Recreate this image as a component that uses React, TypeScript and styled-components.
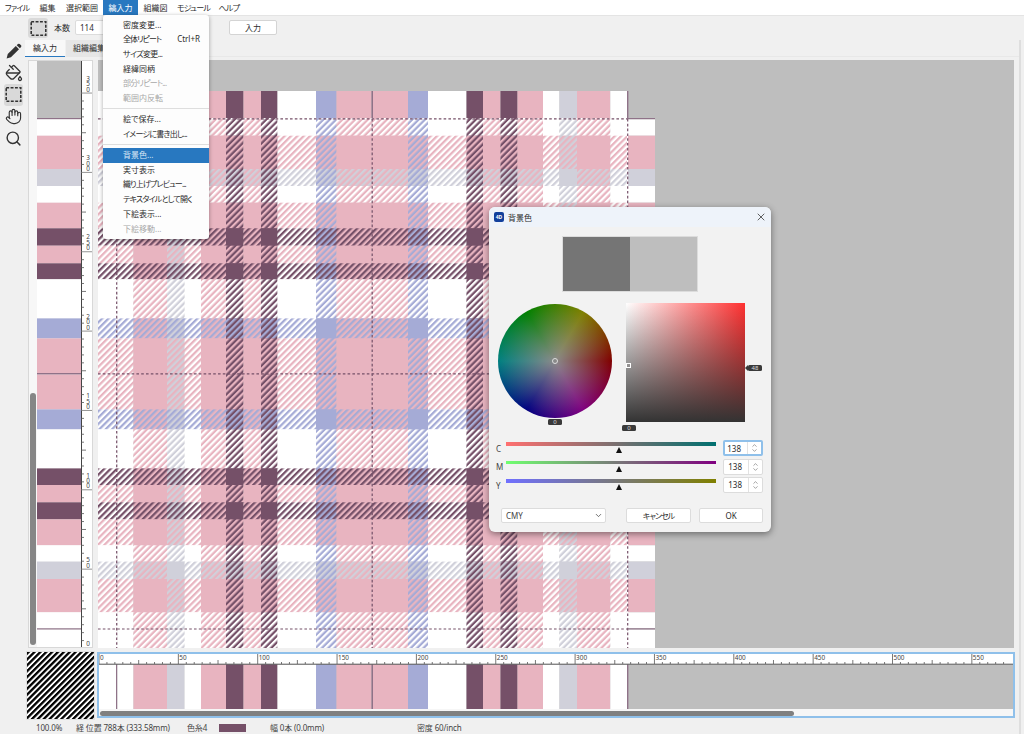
import React from 'react';
import styled, { createGlobalStyle } from 'styled-components';
import { ChevronDown, ChevronUp, Hand, PaintBucket, Search, X } from 'lucide-react';

const W = '#ffffff';
const P = '#e8b4c0';
const G = '#d0d0da';
const D = '#755068';
const L = '#8f7288';
const B = '#a5abd6';
const PX = 1.587;

type Stop = [number, string];

// start of each band in px, last entry closes the repeat
const warp: Stop[] = [
  [98, W], [116, L], [117.4, W], [133.5, P], [167, G], [184.5, W], [201, P], [226, D], [243.5, P],
  [261, D], [277.5, W], [316, B], [336.5, P], [371.5, L], [373, P], [408, B], [428, W], [466.5, D],
  [483, P], [500.5, D], [517.5, P], [543, W], [559.5, G], [577, P], [610.3, W], [627, L], [628.4, W],
];

const weft: Stop[] = [
  [118, L], [119.4, W], [135.7, P], [169, G], [186, W], [202.7, P], [228.3, D], [245.7, P], [263.3, D],
  [279.3, W], [318.4, B], [338.4, P], [373, L], [374.6, P], [409.4, B], [429.4, W], [468.4, D],
  [485, P], [502.3, D], [519.4, P], [545.3, W], [561.6, G], [579, P], [612.3, W], [628.3, L], [629.7, W], [648, W],
];

const bands = (stops: Stop[]) =>
  stops.slice(0, -1).map(([from, color], i) => ({ from, to: stops[i + 1][0], color }));

// thin marker bands take the ground colour of the band before them in the woven area
const woven = (stops: Stop[]) =>
  bands(stops).map((b, i, all) => (b.to - b.from < 2 ? { ...b, color: i ? all[i - 1].color : W } : b));

const hatchColors = [W, P, G, D, B];

const menuNames = [
  { name: 'ファイル', w: 34, tight: 0.8 },
  { name: '編集', w: 27 },
  { name: '選択範囲', w: 42 },
  { name: '縞入力', w: 35, on: true },
  { name: '組織図', w: 35 },
  { name: 'モジュール', w: 41, tight: 0.8 },
  { name: 'ヘルプ', w: 30, tight: 0.6 },
];

const menuItems = [
  { label: '密度変更...' },
  { label: '全体リピート', hint: 'Ctrl+R', tight: 1 },
  { label: 'サイズ変更...', tight: 0.6 },
  { label: '経緯同柄' },
  { label: '部分リピート...', off: true, tight: 0.8 },
  { label: '範囲内反転', off: true },
  { sep: true },
  { label: '絵で保存...' },
  { label: 'イメージに書き出し...', tight: 0.8 },
  { sep: true },
  { label: '背景色...', active: true },
  { label: '実寸表示' },
  { label: '織り上げプレビュー...', tight: 0.9 },
  { label: 'テキスタイルとして開く', tight: 0.8 },
  { label: '下絵表示...' },
  { label: '下絵移動...', off: true },
];

const GlobalStyle = createGlobalStyle`
  html, body {
    margin: 0;
    padding: 0;
    background: #f0f0f0;
  }
  body {
    font-family: "Noto Sans", "Noto Sans CJK JP", sans-serif;
    font-size: 8px;
    font-feature-settings: "palt";
    color: #2c2c2c;
  }
`;

const Page = styled.div`
  position: relative;
  width: 1024px;
  height: 734px;
  overflow: hidden;
  background: #f0f0f0;
  display: flex;
  flex-direction: column;
`;

const MenuBar = styled.div`
  height: 15px;
  background: #fff;
  display: flex;
  box-shadow: 0 1px 0 #e4e4e4;
`;

const MenuName = styled.div<{ $on?: boolean; $w: number; $tight?: number }>`
  width: ${p => p.$w}px;
  line-height: 15px;
  text-align: center;
  white-space: nowrap;
  letter-spacing: ${p => -(p.$tight ?? 0)}px;
  background: ${p => (p.$on ? '#2878c0' : 'transparent')};
  color: ${p => (p.$on ? '#fff' : '#2c2c2c')};
`;

const OptionBar = styled.div`
  height: 25px;
  padding: 3px 0 0 28px;
  box-sizing: border-box;
  display: flex;
  align-items: flex-start;
`;

const IconButton = styled.div`
  width: 20px;
  height: 20px;
  background: #d9d9d9;
  border-radius: 3px;
  display: flex;
  align-items: center;
  justify-content: center;
  color: #333;
`;

const OptionLabel = styled.span`
  margin: 0 5px 0 6px;
  line-height: 20px;
`;

const CountInput = styled.div`
  width: 124px;
  height: 15px;
  margin: 2px 30px 0 0;
  padding-left: 4px;
  box-sizing: border-box;
  background: #fff;
  border: 1px solid #dcdcdc;
  border-radius: 2px;
  line-height: 13px;
`;

const PlainButton = styled.div<{ $w: number; $tight?: number }>`
  width: ${p => p.$w}px;
  height: 15px;
  box-sizing: border-box;
  background: #fff;
  border: 1px solid #d4d4d4;
  border-radius: 2px;
  text-align: center;
  line-height: 13px;
  letter-spacing: ${p => -(p.$tight ?? 0)}px;
`;

const EntryButton = styled(PlainButton)`
  margin-top: 2px;
`;

const Workspace = styled.div`
  width: 1021px;
  flex: 1;
  box-sizing: border-box;
  border-right: 2px solid #dedede;
  display: flex;
  flex-direction: column;
`;

const Body = styled.div`
  height: 608px;
  display: flex;
`;

const ToolColumn = styled.div`
  width: 25px;
  padding: 1px 0 0 4px;
  box-sizing: border-box;
  display: flex;
  flex-direction: column;
  color: #333;
`;

const Tool = styled.div<{ $on?: boolean }>`
  width: 19px;
  height: 21.6px;
  border-radius: 3px;
  background: ${p => (p.$on ? '#d9d9d9' : 'transparent')};
  display: flex;
  align-items: center;
  justify-content: center;
`;

const MainColumn = styled.div`
  flex: 1;
  display: flex;
  flex-direction: column;
`;

const TabRow = styled.div`
  height: 17px;
  margin-bottom: 3px;
  box-sizing: border-box;
  border-bottom: 1px solid #e8e8e8;
  display: flex;
  gap: 1px;
`;

const Tab = styled.div<{ $on?: boolean }>`
  width: ${p => (p.$on ? 40 : 46)}px;
  height: 17px;
  box-sizing: border-box;
  text-align: center;
  line-height: 16px;
  background: ${p => (p.$on ? '#f8f8f8' : '#e6e6e6')};
  border-bottom: ${p => (p.$on ? '1.5px solid #2878c0' : 'none')};
`;

const PanelRow = styled.div`
  height: 588px;
  padding-left: 3px;
  display: flex;
  gap: 5px;
`;

const WeftPanel = styled.div`
  width: 65px;
  box-sizing: border-box;
  border: 1px solid #d8d8d8;
  display: flex;
`;

const WeftScroll = styled.div`
  width: 8px;
  padding: 332px 0 0 1px;
  box-sizing: border-box;
  background: #f7f7f7;
`;

const WeftThumb = styled.div`
  width: 5.5px;
  height: 252px;
  border-radius: 3px;
  background: #868686;
`;

const Canvas = styled.div`
  width: 916px;
  background: #bebebe;
  line-height: 0;
`;

const BottomRow = styled.div`
  height: 67px;
  margin-top: 4px;
  padding-left: 27px;
  display: flex;
  gap: 3px;
`;

const Thumb = styled.div`
  width: 67px;
  line-height: 0;
  box-shadow: 0 0 0 1px #e0e0e0;
`;

const StripFrame = styled.div`
  width: 918px;
  height: 66px;
  box-sizing: border-box;
  border: 2px solid #8fc0ea;
  background: #f6f6f6;
  line-height: 0;
`;

const StripScroll = styled.div`
  height: 7px;
  padding: 1.5px 0 0 1px;
  box-sizing: border-box;
`;

const StripThumb = styled.div`
  width: 694px;
  height: 5px;
  border-radius: 3px;
  background: #808080;
`;

const StatusBar = styled.div`
  height: 12px;
  margin-top: 3px;
  padding-left: 36px;
  display: flex;
  align-items: center;
  line-height: 12px;
  color: #444;
`;

const StatusItem = styled.span<{ $w: number }>`
  width: ${p => p.$w}px;
  white-space: nowrap;
  letter-spacing: -0.15px;
`;

const Swatch = styled.div`
  width: 27px;
  height: 8px;
  margin-right: 24px;
  background: ${D};
`;

const DropMenu = styled.div`
  position: absolute;
  left: 103px;
  top: 15px;
  width: 106px;
  height: 224px;
  padding-top: 2.6px;
  box-sizing: border-box;
  background: #fdfdfd;
  border-radius: 3px;
  box-shadow: 0 1px 4px rgba(0, 0, 0, 0.35);
`;

const DropItem = styled.div<{ $off?: boolean; $active?: boolean; $tight?: number }>`
  height: 14.7px;
  padding: 0 9px 0 20px;
  display: flex;
  justify-content: space-between;
  white-space: nowrap;
  line-height: 14.7px;
  background: ${p => (p.$active ? '#2878c0' : 'transparent')};
  color: ${p => (p.$active ? '#dbe8f5' : p.$off ? '#a8a8a8' : '#2c2c2c')};
  & > span:first-child {
    letter-spacing: ${p => -(p.$tight ?? 0)}px;
  }
`;

const DropSep = styled.div`
  height: 6.5px;
  display: flex;
  align-items: center;
  &::after {
    content: '';
    flex: 1;
    height: 1px;
    background: #dedede;
  }
`;

const Dialog = styled.div`
  position: absolute;
  left: 489px;
  top: 207px;
  width: 282px;
  height: 325px;
  background: #f2f2f2;
  border-radius: 6px;
  overflow: hidden;
  box-shadow: 0 2px 7px rgba(0, 0, 0, 0.45);
  display: flex;
  flex-direction: column;
`;

const TitleBar = styled.div`
  height: 20px;
  padding: 0 4px 0 5px;
  background: #eef3fa;
  display: flex;
  align-items: center;
  gap: 4px;
`;

const AppIcon = styled.div`
  width: 10px;
  height: 10px;
  border-radius: 2px;
  background: #12409c;
  color: #fff;
  font-size: 5px;
  font-weight: 700;
  line-height: 10px;
  text-align: center;
`;

const TitleText = styled.span`
  flex: 1;
`;

const Preview = styled.div`
  width: 134px;
  height: 54px;
  margin: 10px auto 0;
  display: flex;
  box-shadow: 0 0 0 1px #dcdcdc;
`;

const PreviewHalf = styled.div<{ $c: string }>`
  flex: 1;
  background: ${p => p.$c};
`;

const PickerRow = styled.div`
  margin-top: 12px;
  padding-left: 9px;
  display: flex;
  align-items: flex-start;
  gap: 14px;
`;

const Wheel = styled.div`
  position: relative;
  width: 114px;
  height: 114px;
  margin-top: 1px;
  border-radius: 50%;
  background:
    radial-gradient(circle closest-side, rgba(138, 138, 138, 1) 0%, rgba(138, 138, 138, 0) 100%),
    conic-gradient(from 90deg, #800000, #800080, #000080, #008080, #008000, #808000, #800000);
`;

const WheelHandle = styled.div`
  position: absolute;
  left: 54px;
  top: 54px;
  width: 6px;
  height: 6px;
  box-sizing: border-box;
  border: 1px solid #ddd;
  border-radius: 50%;
`;

const ColorBox = styled.div`
  position: relative;
  width: 119px;
  height: 119px;
  background:
    linear-gradient(to top, #333, rgba(51, 51, 51, 0)),
    linear-gradient(to right, #fff, #ff3030);
`;

const BoxHandle = styled.div`
  position: absolute;
  left: 0;
  top: 60px;
  width: 5px;
  height: 5px;
  box-sizing: border-box;
  border: 1px solid #fff;
`;

const Badge = styled.span<{ $x: number; $y: number }>`
  position: absolute;
  left: ${p => p.$x}px;
  top: ${p => p.$y}px;
  width: 14px;
  height: 6px;
  border-radius: 1.5px;
  background: #3a3a3a;
  color: #ddd;
  font-size: 6px;
  line-height: 6px;
  text-align: center;
`;

const BadgeArrow = styled.span`
  position: absolute;
  left: 119px;
  top: 62px;
  border: 3px solid transparent;
  border-right-color: #3a3a3a;
  border-left-width: 0;
`;

const SliderStack = styled.div`
  margin-top: 18px;
  display: flex;
  flex-direction: column;
  gap: 2.5px;
`;

const SliderRow = styled.div`
  height: 16px;
  padding-left: 7px;
  display: flex;
  align-items: center;
`;

const SliderLabel = styled.span`
  width: 10px;
  color: #444;
  font-size: 8px;
`;

const Track = styled.div<{ $from: string; $to: string }>`
  position: relative;
  align-self: flex-start;
  width: 210px;
  height: 3.5px;
  margin: 2px 7px 0 0;
  background: linear-gradient(to right, ${p => p.$from}, ${p => p.$to});
`;

const TrackThumb = styled.span`
  position: absolute;
  left: 110px;
  top: 5px;
  border-style: solid;
  border-width: 0 3.5px 6px;
  border-color: transparent transparent #111;
`;

const Spin = styled.div<{ $focus?: boolean }>`
  width: 40px;
  height: 16px;
  box-sizing: border-box;
  background: #fff;
  border: ${p => (p.$focus ? '2px solid #8fc0ea' : '1px solid #dcdcdc')};
  border-radius: 2px;
  display: flex;
`;

const SpinValue = styled.span`
  flex: 1;
  padding-right: 6px;
  text-align: right;
  line-height: 14px;
`;

const SpinArrows = styled.span`
  width: 13px;
  border-left: 1px solid #e2e2e2;
  display: flex;
  flex-direction: column;
  align-items: center;
  justify-content: center;
  color: #666;
  & svg {
    margin: -1px 0;
  }
`;

const ActionRow = styled.div`
  margin-top: 15px;
  padding-left: 12px;
  display: flex;
`;

const SelectBox = styled.div`
  width: 105px;
  height: 15px;
  margin-right: 20px;
  padding: 0 2px 0 4px;
  box-sizing: border-box;
  background: #fff;
  border: 1px solid #dcdcdc;
  border-radius: 2px;
  display: flex;
  align-items: center;
  justify-content: space-between;
  color: #444;
`;

const ActionButton = styled(PlainButton)`
  margin-right: 8px;
  border-color: #dcdcdc;
`;

const DashRect = ({ size }: { size: number }) => (
  <svg width={size} height={size} viewBox="0 0 14 14">
    <rect x="1" y="1.5" width="12" height="11" fill="none" stroke="#333" strokeWidth="1.3" strokeDasharray="2.4 1.2" />
  </svg>
);

const PencilIcon = () => (
  <svg width="17" height="17" viewBox="0 0 16 16">
    <path d="M1.5 14.5 L2.6 10.4 L10.2 2.8 L13.2 5.8 L5.6 13.4 Z" fill="#333" />
    <path d="M11 2 L12.2 0.9 Q13 0.3 13.8 0.9 L15.1 2.2 Q15.7 3 15.1 3.8 L14 5 Z" fill="#333" />
  </svg>
);

const Hatches = ({ prefix }: { prefix: string }) => (
  <defs>
    {hatchColors.map(color => (
      <pattern
        key={color}
        id={`${prefix}${color.slice(1)}`}
        width="4.49"
        height="4.49"
        patternUnits="userSpaceOnUse"
        patternTransform="rotate(45)"
      >
        <rect width="2.245" height="4.49" fill={color} />
      </pattern>
    ))}
  </defs>
);

const Plaid = () => {
  const warpTop = bands(warp).filter(b => b.from < 628);
  const warpWoven = woven(warp).filter(b => b.from < 628);
  return (
    <svg width="916" height="588" viewBox="98 60 916 588">
      <Hatches prefix="h" />
      {warpTop.map(b => (
        <rect key={`top-${b.from}`} x={b.from} y="91" width={b.to - b.from} height="28" fill={b.color} />
      ))}
      {warpWoven.map(b => (
        <rect key={b.from} x={b.from} y="119" width={b.to - b.from} height="529" fill={b.color} />
      ))}
      {woven(weft).map(b => (
        <rect
          key={b.from}
          x="98"
          y={b.from}
          width="529"
          height={b.to - b.from}
          fill={`url(#h${b.color.slice(1)})`}
        />
      ))}
      {bands(weft).map(b => (
        <rect key={b.from} x="628" y={b.from} width="27" height={b.to - b.from} fill={b.color} />
      ))}
      <g fill="none" stroke={D} strokeWidth="1.2" strokeDasharray="2.6 2.2">
        <path d="M116.7 119V648" />
        <path d="M372.2 119V648" />
        <path d="M627.7 119V648" />
        <path d="M98 118.8H627" />
        <path d="M98 373.8H627" />
        <path d="M98 629H627" />
      </g>
    </svg>
  );
};

const WeftColumn = () => {
  const ticks = Array.from({ length: 71 }, (_, i) => i * 5);
  return (
    <svg width="55" height="586" viewBox="37 61 55 586">
      <rect x="37" y="61" width="44" height="57" fill="#bebebe" />
      {bands(weft).map(b => (
        <rect key={b.from} x="37" y={b.from} width="44" height={b.to - b.from} fill={b.color} />
      ))}
      <rect x="81" y="61" width="11" height="586" fill="#fff" />
      <path d="M81.5 61V647" stroke="#444" strokeWidth="1" />
      {ticks.map(v => {
        const y = 648.5 - v * PX;
        const long = v % 50 === 0 ? 92 : v % 25 === 0 ? 86 : 84;
        return <path key={v} d={`M81 ${y}H${long}`} stroke={v % 50 === 0 && v > 0 ? '#777' : '#555'} strokeWidth="0.8" />;
      })}
      {ticks.filter(v => v % 50 === 0).map(v => {
        const digits = String(v).split('');
        const base = v === 0 ? 645.5 : 647 - v * PX;
        const ys = digits.map((_, i) => base - (digits.length - 1 - i) * 5.4).join(' ');
        const xs = digits.map(() => 86.2).join(' ');
        return (
          <text key={v} x={xs} y={ys} fontSize="6.4" fill="#444">
            {v}
          </text>
        );
      })}
    </svg>
  );
};

const WarpStrip = () => {
  const ticks = Array.from({ length: 115 }, (_, i) => i * 5);
  return (
    <svg width="914" height="55" viewBox="99 654 914 55">
      <rect x="99" y="654" width="914" height="10.5" fill="#fff" />
      <rect x="99" y="664.5" width="914" height="44.5" fill="#bebebe" />
      {bands(warp).filter(b => b.from < 628).map(b => (
        <rect key={b.from} x={b.from} y="664.5" width={b.to - b.from} height="44.5" fill={b.color} />
      ))}
      <path d="M99 664.2H1013" stroke="#444" strokeWidth="0.9" />
      {ticks.map(v => {
        const x = 99 + v * PX;
        const top = v % 50 === 0 ? 654 : v % 25 === 0 ? 660 : 662;
        return <path key={v} d={`M${x} ${top}V664`} stroke="#555" strokeWidth="0.8" />;
      })}
      {ticks.filter(v => v % 50 === 0).map(v => (
        <text key={v} x={100 + v * PX} y="659.6" fontSize="6.4" fill="#444">
          {v}
        </text>
      ))}
    </svg>
  );
};

const Weave = () => (
  <svg width="67" height="67" viewBox="0 0 67 67">
    <defs>
      <pattern id="weave" width="4.15" height="4.15" patternUnits="userSpaceOnUse" patternTransform="rotate(45)">
        <rect width="2.3" height="4.15" fill="#000" />
      </pattern>
    </defs>
    <rect width="67" height="67" fill="#fff" />
    <rect width="67" height="67" fill="url(#weave)" />
  </svg>
);

const sliders = [
  { label: 'C', from: '#ff7070', to: '#007070', focus: true },
  { label: 'M', from: '#70ff70', to: '#800080' },
  { label: 'Y', from: '#7070ff', to: '#808000' },
];

const ColorDialog = () => (
  <Dialog>
    <TitleBar>
      <AppIcon>4D</AppIcon>
      <TitleText>背景色</TitleText>
      <X size={12} strokeWidth={1.5} />
    </TitleBar>
    <Preview>
      <PreviewHalf $c="#757575" />
      <PreviewHalf $c="#bebebe" />
    </Preview>
    <PickerRow>
      <Wheel>
        <WheelHandle />
        <Badge $x={50} $y={115}>0</Badge>
      </Wheel>
      <ColorBox>
        <BoxHandle />
        <BadgeArrow />
        <Badge $x={122} $y={62}>48</Badge>
        <Badge $x={-4} $y={122}>0</Badge>
      </ColorBox>
    </PickerRow>
    <SliderStack>
      {sliders.map(s => (
        <SliderRow key={s.label}>
          <SliderLabel>{s.label}</SliderLabel>
          <Track $from={s.from} $to={s.to}>
            <TrackThumb />
          </Track>
          <Spin $focus={s.focus}>
            <SpinValue>138</SpinValue>
            <SpinArrows>
              <ChevronUp size={7} />
              <ChevronDown size={7} />
            </SpinArrows>
          </Spin>
        </SliderRow>
      ))}
    </SliderStack>
    <ActionRow>
      <SelectBox>
        CMY
        <ChevronDown size={9} />
      </SelectBox>
      <ActionButton $w={65} $tight={1}>キャンセル</ActionButton>
      <ActionButton $w={64}>OK</ActionButton>
    </ActionRow>
  </Dialog>
);

export default function App() {
  return (
    <Page>
      <GlobalStyle />
      <MenuBar>
        {menuNames.map(m => (
          <MenuName key={m.name} $on={m.on} $w={m.w} $tight={m.tight}>{m.name}</MenuName>
        ))}
      </MenuBar>
      <OptionBar>
        <IconButton>
          <DashRect size={17} />
        </IconButton>
        <OptionLabel>本数</OptionLabel>
        <CountInput>114</CountInput>
        <EntryButton $w={48}>入力</EntryButton>
      </OptionBar>
      <Workspace>
        <Body>
          <ToolColumn>
            <Tool><PencilIcon /></Tool>
            <Tool><PaintBucket size={18} strokeWidth={1.7} /></Tool>
            <Tool $on><DashRect size={17} /></Tool>
            <Tool><Hand size={17} strokeWidth={1.6} /></Tool>
            <Tool><Search size={17} strokeWidth={2} /></Tool>
          </ToolColumn>
          <MainColumn>
            <TabRow>
              <Tab $on>縞入力</Tab>
              <Tab>組織編集</Tab>
            </TabRow>
            <PanelRow>
              <WeftPanel>
                <WeftScroll>
                  <WeftThumb />
                </WeftScroll>
                <WeftColumn />
              </WeftPanel>
              <Canvas>
                <Plaid />
              </Canvas>
            </PanelRow>
          </MainColumn>
        </Body>
        <BottomRow>
          <Thumb>
            <Weave />
          </Thumb>
          <StripFrame>
            <WarpStrip />
            <StripScroll>
              <StripThumb />
            </StripScroll>
          </StripFrame>
        </BottomRow>
        <StatusBar>
          <StatusItem $w={40}>100.0%</StatusItem>
          <StatusItem $w={111}>経 位置 788本 (333.58mm)</StatusItem>
          <StatusItem $w={32}>色糸4</StatusItem>
          <Swatch />
          <StatusItem $w={147}>幅 0本 (0.0mm)</StatusItem>
          <StatusItem $w={60}>密度 60/inch</StatusItem>
        </StatusBar>
      </Workspace>
      <DropMenu>
        {menuItems.map((item, i) =>
          item.sep ? (
            <DropSep key={i} />
          ) : (
            <DropItem key={i} $off={item.off} $active={item.active} $tight={item.tight}>
              <span>{item.label}</span>
              {item.hint && <span>{item.hint}</span>}
            </DropItem>
          ),
        )}
      </DropMenu>
      <ColorDialog />
    </Page>
  );
}
